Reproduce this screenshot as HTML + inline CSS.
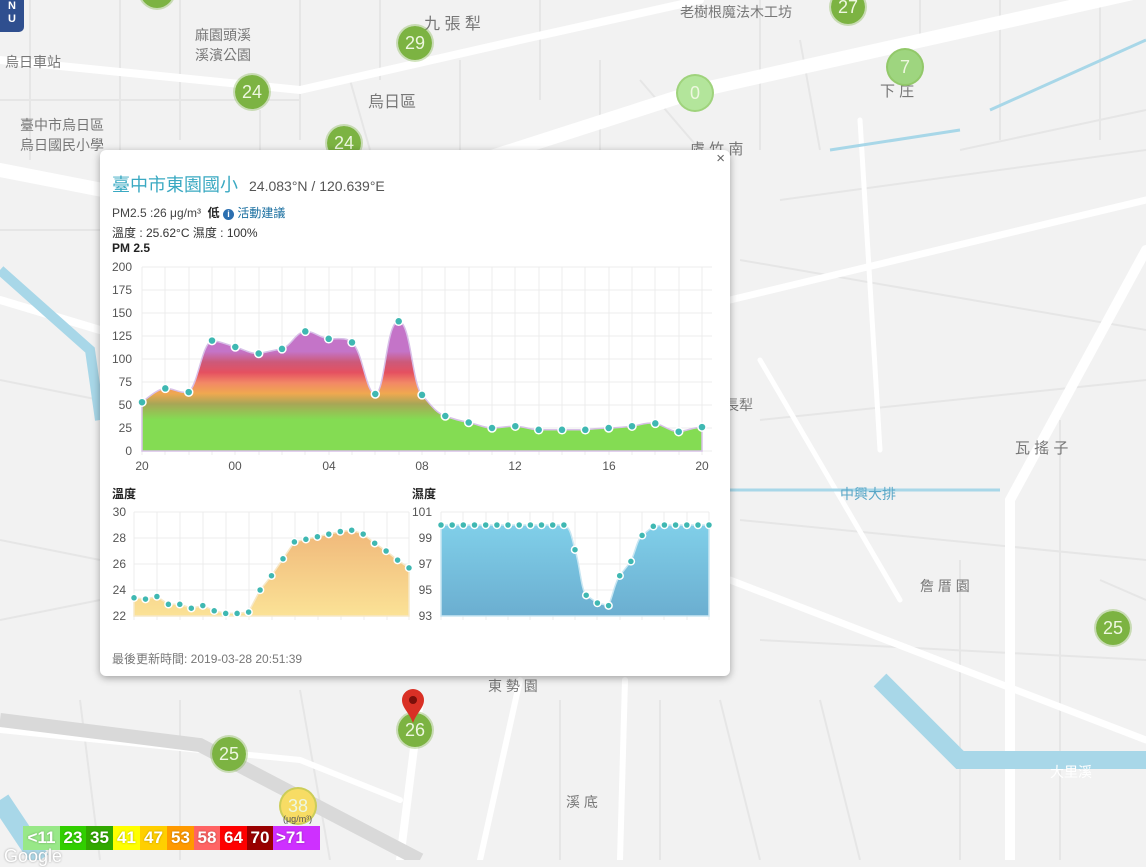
<!DOCTYPE html>
<html><head><meta charset="utf-8"><style>
html,body{margin:0;padding:0;width:1146px;height:860px;overflow:hidden;background:#f2f2f2;font-family:"Liberation Sans","Noto Sans CJK TC",sans-serif}
.m{position:absolute;border-radius:50%;background:#7cb342;color:#eef7e0;font-size:18px;text-align:center;width:34px;height:34px;line-height:34px;border:2px solid rgba(124,179,66,.35);background-clip:padding-box}
.lbl{position:absolute;color:#777;font-size:14px;font-family:"Liberation Sans","Noto Sans CJK TC",sans-serif}
.pop{position:absolute;left:100px;top:150px;width:630px;height:526px;background:#fff;border-radius:6px;box-shadow:0 2px 8px rgba(0,0,0,.35)}
.leg{position:absolute;top:826px;height:24px;line-height:24px;color:#fff;font-weight:bold;font-size:17px;text-align:center;text-shadow:0 0 2px rgba(0,0,0,.3)}
</style></head><body>
<svg width="1146" height="860" style="position:absolute;left:0;top:0">
<g stroke="#e6e6e6" stroke-width="2" fill="none">
<path d="M0 100H300M0 230H100M30 0V160M120 0V150M180 0V140M260 110V150M300 0V140M350 80L370 150M380 0V80M460 60V150M540 0V100M600 60V150M640 80L700 150M760 0V150M800 40L820 150M960 150L1146 110M780 200L1146 150M740 260L1146 330M760 420L1146 380M740 520L1146 560M960 560V860M1060 420V860M1100 580L1146 600M760 640L1146 660M560 700V860M660 700V860M720 700L760 860M820 700L860 860M300 690L330 860M180 700V860M80 700L100 860M0 380L100 400M0 620L100 600M0 540L100 560M920 0V40M1000 0V140M1100 0V140"/>
</g>
<g stroke="#fff" fill="none" stroke-linecap="round">
<path d="M0 170 L230 215 L420 180 L700 90 L1146 -10" stroke-width="14"/>
<path d="M0 60 L300 90 L520 40 L700 0" stroke-width="8"/>
<path d="M730 300 L1146 200" stroke-width="7"/>
<path d="M1010 860 L1010 500 L1146 250" stroke-width="10"/>
<path d="M730 580 L1146 740" stroke-width="7"/>
<path d="M400 860 L420 700" stroke-width="8"/>
<path d="M520 680 L480 860" stroke-width="6"/>
<path d="M620 860 L625 680" stroke-width="6"/>
<path d="M0 300 L100 330" stroke-width="8"/>
<path d="M0 730 L300 760 L400 800" stroke-width="6"/>
<path d="M760 360 L900 600" stroke-width="5"/>
<path d="M860 120 L880 450" stroke-width="5"/>
</g>
<path d="M0 720 L200 745 L420 860" stroke="#d9d9d9" stroke-width="14" fill="none"/>
<path d="M0 270 L90 350 L100 420" stroke="#a8d7e8" stroke-width="10" fill="none"/>
<path d="M880 680 L960 760 L1146 760" stroke="#a8d7e8" stroke-width="18" fill="none"/>
<path d="M990 110 L1146 40" stroke="#a8d7e8" stroke-width="3" fill="none"/>
<path d="M830 150 L960 130" stroke="#a8d7e8" stroke-width="3" fill="none"/>
<path d="M730 490 L1000 490" stroke="#a8d7e8" stroke-width="3" fill="none"/>
<path d="M0 800 L40 860" stroke="#a8d7e8" stroke-width="20" fill="none"/>
</svg>
<div class="lbl" style="left:424px;top:10px;font-size:16px">九 張 犁</div>
<div class="lbl" style="left:368px;top:88px;font-size:16px">烏日區</div>
<div class="lbl" style="left:690px;top:138px;font-size:15px">虞 竹 南</div>
<div class="lbl" style="left:880px;top:80px;font-size:15px">下 庄</div>
<div class="lbl" style="left:1015px;top:437px;font-size:15px">瓦 搖 子</div>
<div class="lbl" style="left:920px;top:576px;font-size:14px">詹 厝 園</div>
<div class="lbl" style="left:488px;top:676px;font-size:14px">東 勢 園</div>
<div class="lbl" style="left:566px;top:792px;font-size:14px">溪 底</div>
<div class="lbl" style="left:5px;top:52px">烏日車站</div>
<div class="lbl" style="left:20px;top:115px">臺中市烏日區<br>烏日國民小學</div>
<div class="lbl" style="left:195px;top:25px">麻園頭溪<br>溪濱公園</div>
<div class="lbl" style="left:680px;top:2px">老樹根魔法木工坊</div>
<div class="lbl" style="left:725px;top:395px">長犁</div>
<div class="lbl" style="left:1050px;top:762px;color:#fff">大里溪</div>
<div class="lbl" style="left:840px;top:484px;color:#5aa7c7">中興大排</div>
<div style="position:absolute;left:0;top:0;width:24px;height:32px;background:#2f4f8f;border-radius:0 0 5px 0;color:#fff;font-size:11px;font-weight:bold;text-align:center;line-height:13px">N<br>U</div>
<div class="m" style="left:396px;top:24px">29</div>
<div class="m" style="left:233px;top:73px">24</div>
<div class="m" style="left:325px;top:124px">24</div>
<div class="m" style="left:829px;top:-12px">27</div>
<div class="m" style="left:138px;top:-28px">&nbsp;</div>
<div class="m" style="left:886px;top:48px;background:#9ed57f">7</div>
<div class="m" style="left:676px;top:74px;background:#b3e59b">0</div>
<div class="m" style="left:1094px;top:609px">25</div>
<div class="m" style="left:210px;top:735px">25</div>
<div class="m" style="left:396px;top:711px">26</div>
<div class="m" style="left:279px;top:787px;background:#f7dc64">38</div>
<div style="position:absolute;left:283px;top:814px;font-size:9px;color:#555">(μg/m³)</div>
<svg style="position:absolute;left:401px;top:688px" width="24" height="36"><path d="M12 35 C8 24 1 20 1 12 A11 11 0 0 1 23 12 C23 20 16 24 12 35Z" fill="#d93025"/><circle cx="12" cy="12" r="4" fill="#7a0f0a"/></svg>
<div class="leg" style="left:23px;width:37px;background:#98e888">&lt;11</div>
<div class="leg" style="left:60px;width:26px;background:#31cf00">23</div>
<div class="leg" style="left:86px;width:27px;background:#31a800">35</div>
<div class="leg" style="left:113px;width:27px;background:#ffff00">41</div>
<div class="leg" style="left:140px;width:27px;background:#ffcf00">47</div>
<div class="leg" style="left:167px;width:27px;background:#ff9a00">53</div>
<div class="leg" style="left:194px;width:26px;background:#ff6464">58</div>
<div class="leg" style="left:220px;width:27px;background:#ff0000">64</div>
<div class="leg" style="left:247px;width:26px;background:#990000">70</div>
<div class="leg" style="left:273px;width:47px;background:#ce30ff;text-align:left;padding-left:3px;box-sizing:border-box">&gt;71</div>
<div style="position:absolute;left:4px;top:846px;font-size:18px;color:#fff;text-shadow:0 0 2px #999">Google</div>

<div class="pop">
<div style="position:absolute;right:5px;top:0px;font-size:15px;color:#666">×</div>
<div style="position:absolute;left:12px;top:21px;font-size:18px;color:#3aa9c2">臺中市東園國小 <span style="font-size:14px;color:#555;margin-left:6px">24.083°N / 120.639°E</span></div>
<div style="position:absolute;left:12px;top:54px;font-size:12px;color:#444">PM2.5 :26 μg/m³ &nbsp;<b style="color:#222">低</b> <span style="color:#1a6fa0"><span style="display:inline-block;width:11px;height:11px;border-radius:50%;background:#2b6fb0;color:#fff;font-size:9px;line-height:11px;text-align:center;font-weight:bold">i</span> 活動建議</span></div>
<div style="position:absolute;left:12px;top:74px;font-size:12px;color:#333">溫度 : 25.62°C 濕度 : 100%</div>
<div style="position:absolute;left:12px;top:91px;font-size:12px;color:#222;font-weight:bold">PM 2.5</div>
<div style="position:absolute;left:12px;top:335px;font-size:12px;color:#222;font-weight:bold">溫度</div>
<div style="position:absolute;left:312px;top:335px;font-size:12px;color:#222;font-weight:bold">濕度</div>
<div style="position:absolute;left:12px;top:500px;font-size:12px;color:#777">最後更新時間: 2019-03-28 20:51:39</div>
</div>

<svg width="1146" height="860" style="position:absolute;left:0;top:0" font-family="Liberation Sans, sans-serif" font-size="12" fill="#555">
<defs>
<linearGradient id="pg" gradientUnits="userSpaceOnUse" x1="0" y1="451" x2="0" y2="320">
<stop offset="0" stop-color="#84dc53"/><stop offset=".24" stop-color="#84dc53"/><stop offset=".36" stop-color="#a8a656"/><stop offset=".44" stop-color="#f0a850"/><stop offset=".52" stop-color="#f28866"/><stop offset=".6" stop-color="#e55060"/><stop offset=".68" stop-color="#cc5a7a"/><stop offset=".76" stop-color="#c474c8"/><stop offset="1" stop-color="#c474c8"/>
</linearGradient>
<linearGradient id="tg" x1="0" y1="0" x2="0" y2="1"><stop offset="0" stop-color="#f0b87a"/><stop offset="1" stop-color="#fbe296"/></linearGradient>
<linearGradient id="hg" x1="0" y1="0" x2="0" y2="1"><stop offset="0" stop-color="#80cfe9"/><stop offset="1" stop-color="#6baed0"/></linearGradient>
</defs>
<g stroke="#ececec" stroke-width="1">
<path d="M142 267H712M142 290H712M142 313H712M142 336H712M142 359H712M142 382H712M142 405H712M142 428H712M142 451H712"/>
<path d="M142 267V455M165 267V455M189 267V455M212 267V455M235 267V455M259 267V455M282 267V455M305 267V455M329 267V455M352 267V455M375 267V455M399 267V455M422 267V455M445 267V455M469 267V455M492 267V455M515 267V455M539 267V455M562 267V455M585 267V455M609 267V455M632 267V455M655 267V455M679 267V455M702 267V455"/>
<path d="M134 512H409M134 538H409M134 564H409M134 590H409M134 616H409M441 512H709M441 538H709M441 564H709M441 590H709M441 616H709"/>
<path d="M134 512V620M157 512V620M180 512V620M203 512V620M226 512V620M249 512V620M272 512V620M295 512V620M318 512V620M341 512V620M364 512V620M387 512V620M409 512V620M441 512V620M463 512V620M486 512V620M508 512V620M530 512V620M553 512V620M575 512V620M597 512V620M620 512V620M642 512V620M664 512V620M687 512V620M709 512V620"/>
</g>
<g text-anchor="end">
<text x="132" y="271">200</text><text x="132" y="294">175</text><text x="132" y="317">150</text><text x="132" y="340">125</text><text x="132" y="363">100</text><text x="132" y="386">75</text><text x="132" y="409">50</text><text x="132" y="432">25</text><text x="132" y="455">0</text>
<text x="126" y="516">30</text><text x="126" y="542">28</text><text x="126" y="568">26</text><text x="126" y="594">24</text><text x="126" y="620">22</text>
<text x="432" y="516">101</text><text x="432" y="542">99</text><text x="432" y="568">97</text><text x="432" y="594">95</text><text x="432" y="620">93</text>
</g>
<g text-anchor="middle"><text x="142" y="470">20</text><text x="235" y="470">00</text><text x="329" y="470">04</text><text x="422" y="470">08</text><text x="515" y="470">12</text><text x="609" y="470">16</text><text x="702" y="470">20</text></g>
<path d="M142 451L142 402.2C150 396 158 389 165.3 388.4C173 388 181 394 188.7 392.1C198 385 202 343 212 340.6C220 341 228 345 235.3 347C243 349 250 354 258.7 353.5C267 352 274 350 282 348.9C291 346 296 332 305.3 331.4C314 331 320 338 328.7 338.8C337 339 346 337 352 342.4C363 352 366 394 375.3 394C385 394 386 321 398.7 321.3C411 322 412 385 422 394.9C430 404 436 413 445.3 416C453 419 461 421 468.7 422.5C477 424 484 428 492 428C500 428 507 426 515.3 426.2C523 426 531 430 538.7 429.8L562 429.8L585.3 429.8C593 429 601 428 608.7 428C616 428 624 427 632 426.2C640 425 648 422 655.3 423.4C663 425 671 432 678.7 431.7C687 431 694 427 702 427.1L702 451Z" fill="url(#pg)" stroke="#d8c0e8" stroke-width="1.5"/>
<path d="M134 616V597.8L145.5 599.1L156.9 596.5L168.4 604.3L179.8 604.3L191.3 608.2L202.8 605.6L214.2 610.8L225.7 613.4L237.1 613.4L248.6 612.1L260.1 590L271.5 575.7L283 558.8L294.4 541.9L305.9 539.3L317.4 536.7L328.8 534.1L340.3 531.5L351.7 530.2L363.2 534.1L374.7 543.2L386.1 551L397.6 560.1L409 567.9V616Z" fill="url(#tg)" stroke="#f6e8c8" stroke-width="1.5"/>
<path d="M441 616V525H563.9C571 527 572 540 575 549.7C580 565 581 590 586.2 595.2L597.4 603L608.6 605.6C613 595 615 582 619.7 575.7L630.9 561.4C636 550 637 540 642.1 535.4L653.3 526.3L664.4 525H709V616Z" fill="url(#hg)" stroke="#c8e6f2" stroke-width="1.5"/>
<g fill="#3fb8b2" stroke="#fff" stroke-width="1.5">
<circle cx="142" cy="402.2" r="4"/><circle cx="165.3" cy="388.4" r="4"/><circle cx="188.7" cy="392.1" r="4"/><circle cx="212" cy="340.6" r="4"/><circle cx="235.3" cy="347" r="4"/><circle cx="258.7" cy="353.5" r="4"/><circle cx="282" cy="348.9" r="4"/><circle cx="305.3" cy="331.4" r="4"/><circle cx="328.7" cy="338.8" r="4"/><circle cx="352" cy="342.4" r="4"/><circle cx="375.3" cy="394" r="4"/><circle cx="398.7" cy="321.3" r="4"/><circle cx="422" cy="394.9" r="4"/><circle cx="445.3" cy="416" r="4"/><circle cx="468.7" cy="422.5" r="4"/><circle cx="492" cy="428" r="4"/><circle cx="515.3" cy="426.2" r="4"/><circle cx="538.7" cy="429.8" r="4"/><circle cx="562" cy="429.8" r="4"/><circle cx="585.3" cy="429.8" r="4"/><circle cx="608.7" cy="428" r="4"/><circle cx="632" cy="426.2" r="4"/><circle cx="655.3" cy="423.4" r="4"/><circle cx="678.7" cy="431.7" r="4"/><circle cx="702" cy="427.1" r="4"/>
<circle cx="134" cy="597.8" r="3.5"/><circle cx="145.5" cy="599.1" r="3.5"/><circle cx="156.9" cy="596.5" r="3.5"/><circle cx="168.4" cy="604.3" r="3.5"/><circle cx="179.8" cy="604.3" r="3.5"/><circle cx="191.3" cy="608.2" r="3.5"/><circle cx="202.8" cy="605.6" r="3.5"/><circle cx="214.2" cy="610.8" r="3.5"/><circle cx="225.7" cy="613.4" r="3.5"/><circle cx="237.1" cy="613.4" r="3.5"/><circle cx="248.6" cy="612.1" r="3.5"/><circle cx="260.1" cy="590" r="3.5"/><circle cx="271.5" cy="575.7" r="3.5"/><circle cx="283" cy="558.8" r="3.5"/><circle cx="294.4" cy="541.9" r="3.5"/><circle cx="305.9" cy="539.3" r="3.5"/><circle cx="317.4" cy="536.7" r="3.5"/><circle cx="328.8" cy="534.1" r="3.5"/><circle cx="340.3" cy="531.5" r="3.5"/><circle cx="351.7" cy="530.2" r="3.5"/><circle cx="363.2" cy="534.1" r="3.5"/><circle cx="374.7" cy="543.2" r="3.5"/><circle cx="386.1" cy="551" r="3.5"/><circle cx="397.6" cy="560.1" r="3.5"/><circle cx="409" cy="567.9" r="3.5"/>
<circle cx="441" cy="525" r="3.5"/><circle cx="452.2" cy="525" r="3.5"/><circle cx="463.3" cy="525" r="3.5"/><circle cx="474.5" cy="525" r="3.5"/><circle cx="485.7" cy="525" r="3.5"/><circle cx="496.9" cy="525" r="3.5"/><circle cx="508" cy="525" r="3.5"/><circle cx="519.2" cy="525" r="3.5"/><circle cx="530.4" cy="525" r="3.5"/><circle cx="541.5" cy="525" r="3.5"/><circle cx="552.7" cy="525" r="3.5"/><circle cx="563.9" cy="525" r="3.5"/><circle cx="575" cy="549.7" r="3.5"/><circle cx="586.2" cy="595.2" r="3.5"/><circle cx="597.4" cy="603" r="3.5"/><circle cx="608.6" cy="605.6" r="3.5"/><circle cx="619.7" cy="575.7" r="3.5"/><circle cx="630.9" cy="561.4" r="3.5"/><circle cx="642.1" cy="535.4" r="3.5"/><circle cx="653.3" cy="526.3" r="3.5"/><circle cx="664.4" cy="525" r="3.5"/><circle cx="675.6" cy="525" r="3.5"/><circle cx="686.8" cy="525" r="3.5"/><circle cx="698" cy="525" r="3.5"/><circle cx="709" cy="525" r="3.5"/>
</g>
</svg>
</body></html>
